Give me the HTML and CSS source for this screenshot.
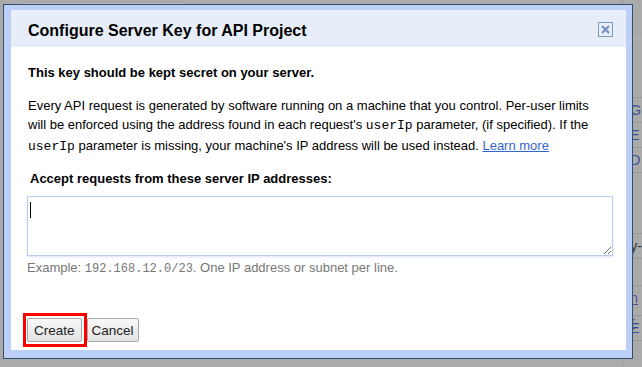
FILE: index.html
```html
<!DOCTYPE html>
<html lang="en">
<head>
    <meta charset="UTF-8">
    <title>Configure Server Key</title>
    <link rel="stylesheet" href="styles.css">
</head>
<body>
    <div class="page">
        <div class="page-main">
            <div class="search"></div>
        </div>
        <ul class="side">
            <li class="side-top"></li>
            <li class="link">G</li>
            <li class="link">E</li>
            <li class="link">D</li>
            <li class="blank"></li>
            <li class="plain">y-</li>
            <li class="blank-sm"></li>
            <li class="visited">n r</li>
            <li class="link">E</li>
        </ul>
    </div>

    <div class="dialog">
        <div class="dialog-inner">
            <div class="dialog-title">
                <span>Configure Server Key for API Project</span>
                <span class="close">
                    <svg width="15" height="15" viewBox="0 0 15 15">
                        <rect x="0.5" y="0.5" width="14" height="14" fill="none" stroke="#7e9bc6"/>
                        <path d="M4 4 L11 11 M11 4 L4 11" stroke="#6f8dba" stroke-width="2"/>
                    </svg>
                </span>
            </div>
            <div class="dialog-content">
                <p class="secret">This key should be kept secret on your server.</p>
                <p>Every API request is generated by software running on a machine that you control. Per-user limits<br>
                will be enforced using the address found in each request's <code>userIp</code> parameter, (if specified). If the<br>
                <code>userIp</code> parameter is missing, your machine's IP address will be used instead. <a href="#">Learn more</a></p>
                <label for="ips">Accept requests from these server IP addresses:</label>
                <textarea id="ips" class="focused"></textarea>
                <div class="hint">Example: <code>192.168.12.0/23</code>. One IP address or subnet per line.</div>
            </div>
            <div class="dialog-buttons">
                <span class="highlight"><button class="btn btn-create">Create</button></span>
                <button class="btn btn-cancel">Cancel</button>
            </div>
        </div>
    </div>
</body>
</html>
```

FILE: styles.css
```css
body {
    margin: 0;
    width: 642px;
    height: 367px;
    overflow: hidden;
    position: relative;
    background: #aaaaaa;
    font-family: "Liberation Sans", Arial, sans-serif;
}
.page {
    display: flex;
    height: 367px;
}
.page-main {
    width: 628px;
    padding-left: 23px;
    box-sizing: border-box;
}
.search {
    width: 160px;
    height: 3px;
    border-bottom: 1px solid #b8b8b8;
}
.side {
    list-style: none;
    margin: 0;
    padding: 0 0 0 7px;
    border-left: 1px solid #9c9c9c;
    flex: 1;
    font-size: 14px;
}
.side li {
    border-bottom: 1px solid #9a9a9a;
    height: 24px;
    line-height: 24px;
}
.side .side-top {
    border-top: 1px solid #b4b4b4;
    margin-top: 38px;
    height: 58px;
}
.side .link {
    color: #3c4f9c;
}
.side .blank {
    height: 60px;
}
.side .blank-sm {
    height: 26px;
}
.side .plain {
    color: #333;
}
.side .visited {
    color: #5a4a9a;
    text-decoration: underline;
    height: 29px;
}

.dialog {
    position: absolute;
    left: 3px;
    top: 4px;
    width: 630px;
    height: 355px;
    box-sizing: border-box;
    border: 1px solid #33506f;
    background: #bccff7;
    padding: 5px 6px 8px 7px;
}
.dialog-inner {
    background: #fff;
    height: 100%;
    display: flex;
    flex-direction: column;
}
.dialog-title {
    background: #e8eef9;
    height: 37px;
    box-sizing: border-box;
    padding: 12px 13px 0 17px;
    font-size: 16px;
    font-weight: bold;
    line-height: 18px;
    color: #000;
    display: flex;
    justify-content: space-between;
}
.close {
    width: 15px;
    height: 15px;
}
.close svg {
    display: block;
}
.dialog-content {
    padding: 16px 14px 0 17px;
    font-size: 13px;
    line-height: 19.5px;
    color: #000;
}
.dialog-content p {
    margin: 0 0 13px 0;
}
.secret {
    font-weight: bold;
}
code {
    font-family: "Liberation Mono", "Courier New", monospace;
    font-size: 13px;
}
a {
    color: #3366cc;
}
label {
    display: block;
    font-weight: bold;
    padding-left: 2px;
    margin-bottom: 7px;
}
textarea {
    display: block;
    width: 586px;
    height: 60px;
    margin-left: -1px;
    box-sizing: border-box;
    border: 1px solid #bccbe9;
    box-shadow: 0 1px 2px rgba(150, 175, 225, 0.35);
    font-family: "Liberation Sans", Arial, sans-serif;
    font-size: 13px;
    padding: 4px;
    resize: vertical;
    outline: none;
}
/* the caret shown in the focused field */
textarea.focused {
    background: linear-gradient(#000, #000) no-repeat 2px 5px / 1px 16px, #fff;
}
.hint {
    color: #777;
    margin-top: 2px;
    margin-left: -1px;
}
.hint code {
    font-size: 12px;
}
.dialog-buttons {
    margin-top: auto;
    padding: 0 0 3px 12px;
    display: flex;
    align-items: center;
}
.highlight {
    display: inline-flex;
    border: 3px solid #ff0000;
    padding: 2px 2px 2px 1px;
}
.btn {
    height: 24px;
    font-family: "Liberation Sans", Arial, sans-serif;
    font-size: 13.5px;
    color: #222;
    border: 1px solid #a9a9a9;
    border-radius: 2px;
    background: linear-gradient(#f9f9f9, #e2e2e2);
    margin: 0;
    cursor: pointer;
}
.btn-create {
    padding: 0 6px;
}
.btn-cancel {
    padding: 0 4px;
}
```
